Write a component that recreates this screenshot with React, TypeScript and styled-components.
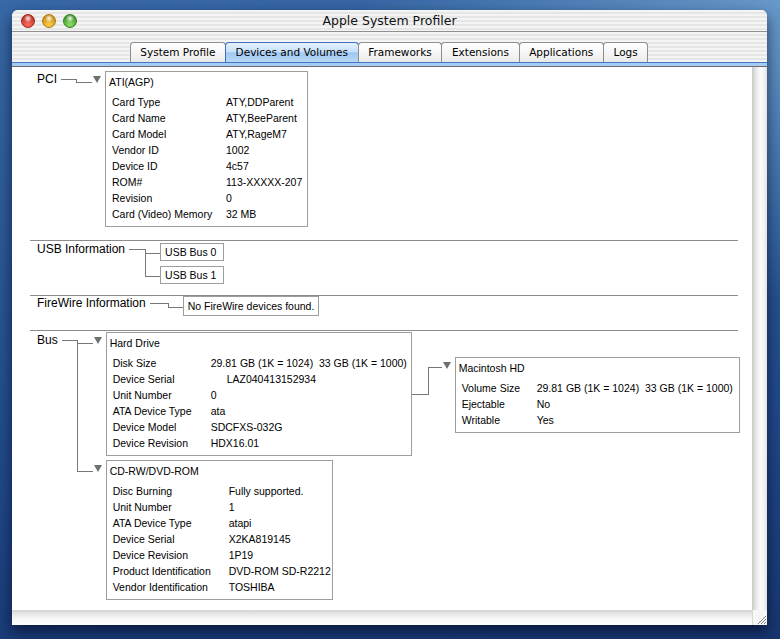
import React from 'react';
import styled, { createGlobalStyle } from 'styled-components';

const GlobalStyle = createGlobalStyle`
  html, body {
    margin: 0;
    padding: 0;
  }
  body {
    width: 780px;
    height: 639px;
    overflow: hidden;
    font-family: "Liberation Sans", Arial, sans-serif;
  }
`;

const pinstripe = `repeating-linear-gradient(to bottom, #f4f4f4 0px, #f4f4f4 2px, #e6e6e6 2px, #e6e6e6 4px)`;

const Desktop = styled.div`
  width: 780px;
  height: 639px;
  box-sizing: border-box;
  padding: 10px 0 0 12px;
  background:
    radial-gradient(ellipse 420px 300px at 780px 0px, rgba(120, 170, 215, 0.75), rgba(120, 170, 215, 0) 100%),
    linear-gradient(175deg, #3868a6 0%, #2a5896 35%, #1f4788 70%, #173670 100%);
`;

const Window = styled.div`
  width: 755px;
  height: 615px;
  display: flex;
  flex-direction: column;
  border-radius: 6px 6px 0 0;
  overflow: hidden;
  background: #ececec;
  box-shadow: 0 6px 14px rgba(0, 0, 20, 0.6);
`;

const TitleBar = styled.div`
  height: 21px;
  flex-shrink: 0;
  display: grid;
  grid-template-columns: 1fr auto 1fr;
  align-items: center;
  background: ${pinstripe};
  border-bottom: 1px solid #8f8f8f;
`;

const Lights = styled.div`
  display: flex;
  gap: 7px;
  padding-left: 9px;
`;

const Light = styled.span<{ $c: string; $d: string }>`
  width: 14px;
  height: 14px;
  border-radius: 50%;
  box-sizing: border-box;
  border: 1px solid ${(p) => p.$d};
  background:
    radial-gradient(circle at 50% 28%, rgba(255, 255, 255, 0.9) 0, rgba(255, 255, 255, 0) 38%),
    radial-gradient(circle at 50% 80%, ${(p) => p.$c} 0, ${(p) => p.$d} 100%);
`;

const Title = styled.div`
  font-family: "DejaVu Sans", sans-serif;
  font-size: 12.5px;
  color: #111;
  line-height: 21px;
`;

const TabBar = styled.div`
  height: 30px;
  flex-shrink: 0;
  display: flex;
  justify-content: center;
  align-items: flex-end;
  background: ${pinstripe};
`;

const Tab = styled.div<{ $active?: boolean }>`
  height: 20px;
  box-sizing: border-box;
  padding: 0 9.6px;
  margin-left: -1px;
  border: 1px solid ${(p) => (p.$active ? '#3d6fc0' : '#8e8e8e')};
  border-bottom: none;
  border-radius: 4px 4px 0 0;
  font-family: "DejaVu Sans", sans-serif;
  font-size: 10.5px;
  line-height: 19px;
  color: #000;
  background: ${(p) =>
    p.$active
      ? 'linear-gradient(to bottom, #e6f1fd 0%, #c8e0f9 45%, #9fc8f2 52%, #b9d9f8 100%)'
      : 'linear-gradient(to bottom, #ffffff 0%, #f6f6f6 50%, #e9e9e9 100%)'};
`;

const TabRule = styled.div`
  height: 4px;
  flex-shrink: 0;
  background: linear-gradient(to bottom, #4478c4 0, #4478c4 1px, #a6cbf3 1px, #a6cbf3 4px);
  border-bottom: 1px solid #6b6b6b;
`;

const Body = styled.div`
  flex: 1;
  display: flex;
  min-height: 0;
`;

const Content = styled.div`
  flex: 1;
  background: #fff;
`;

const VScroll = styled.div`
  width: 15px;
  background: linear-gradient(to right, #c9c9c9 0%, #e6e6e6 25%, #fbfbfb 55%, #f3f3f3 80%, #e2e2e2 100%);
`;

const Footer = styled.div`
  height: 15px;
  flex-shrink: 0;
  display: flex;
`;

const HScroll = styled.div`
  flex: 1;
  background: linear-gradient(to bottom, #d3d3d3 0%, #e9e9e9 30%, #f8f8f8 60%, #fdfdfd 100%);
`;

const Grip = styled.div`
  width: 15px;
  background: #f6f6f6;
  border-left: 1px solid #d8d8d8;
  box-sizing: border-box;
  display: flex;
  align-items: flex-end;
  justify-content: flex-end;
`;

/* tree */

const Section = styled.div<{ $top: number; $bottom: number }>`
  display: flex;
  align-items: flex-start;
  padding: ${(p) => p.$top}px 0 ${(p) => p.$bottom}px 25px;
`;

const SectionLabel = styled.div<{ $y: number }>`
  font-size: 12px;
  line-height: 14px;
  color: #000;
  margin-top: ${(p) => p.$y - 7}px;
  white-space: nowrap;
`;

const Stub = styled.div<{ $y: number; $w: number }>`
  width: ${(p) => p.$w}px;
  margin: ${(p) => p.$y}px 0 0 4px;
  border-top: 1px solid #777;
  flex-shrink: 0;
`;

const Divider = styled.div`
  height: 1px;
  background: #8c8c8c;
  margin: 0 14px 0 18px;
`;

const Branches = styled.div`
  display: flex;
  flex-direction: column;
`;

const BranchRow = styled.div`
  display: flex;
  align-items: stretch;
`;

const Elbow = styled.div<{ $w: number }>`
  width: ${(p) => p.$w}px;
  flex-shrink: 0;
  display: flex;
  flex-direction: column;
`;

const ElbowGap = styled.div<{ $h: number }>`
  height: ${(p) => p.$h}px;
  flex-shrink: 0;
`;

const ElbowArm = styled.div<{ $h: number }>`
  height: ${(p) => p.$h}px;
  box-sizing: border-box;
  flex-shrink: 0;
  border-left: 1px solid #777;
  border-bottom: 1px solid #777;
`;

const ElbowTail = styled.div<{ $on: boolean }>`
  flex: 1;
  border-left: 1px solid ${(p) => (p.$on ? '#777' : 'transparent')};
`;

const BranchBody = styled.div<{ $after: number }>`
  padding-bottom: ${(p) => p.$after}px;
`;

const Node = styled.div`
  display: flex;
  align-items: flex-start;
`;

const TriangleSvg = styled.svg`
  flex-shrink: 0;
  margin: 5px 4px 0 1px;
`;

const Box = styled.div<{ $w: number }>`
  width: ${(p) => p.$w}px;
  box-sizing: border-box;
  border: 1px solid #9d9d9d;
  background: #fff;
  font-size: 10.5px;
  color: #000;
  flex-shrink: 0;
`;

const InfoBox = styled(Box)`
  padding: 2px 3px 4px 3px;
`;

const PlainBox = styled(Box)<{ $h: number }>`
  height: ${(p) => p.$h}px;
  line-height: ${(p) => p.$h - 2}px;
  padding-left: 4px;
  white-space: nowrap;
`;

const BoxTitle = styled.div`
  line-height: 16px;
  white-space: nowrap;
`;

const Props = styled.div<{ $label: number }>`
  display: grid;
  grid-template-columns: ${(p) => p.$label}px auto;
  grid-auto-rows: 16px;
  align-items: center;
  margin-top: 4px;
  padding-left: 3px;
`;

const PropText = styled.span<{ $indent?: number }>`
  white-space: pre;
  padding-left: ${(p) => p.$indent ?? 0}px;
`;

const SideLink = styled.div`
  display: flex;
  align-items: flex-start;
  margin-top: 35px;
`;

const SideDrop = styled.div`
  width: 17px;
  height: 28px;
  box-sizing: border-box;
  border-right: 1px solid #777;
  border-bottom: 1px solid #777;
`;

const SideRun = styled.div`
  width: 13px;
  border-top: 1px solid #777;
`;

const SubNode = styled(Node)`
  margin-top: 25px;
`;

const Triangle = () => (
  <TriangleSvg width="8" height="7" viewBox="0 0 8 7">
    <polygon points="0,0 8,0 4,7" fill="#6f6f6f" />
  </TriangleSvg>
);

type Row = [string, string, number?];

const Info = ({ title, rows, width, label }: { title: string; rows: Row[]; width: number; label: number }) => (
  <InfoBox $w={width}>
    <BoxTitle>{title}</BoxTitle>
    <Props $label={label}>
      {rows.map(([k, v, indent]) => (
        <React.Fragment key={k}>
          <PropText>{k}</PropText>
          <PropText $indent={indent}>{v}</PropText>
        </React.Fragment>
      ))}
    </Props>
  </InfoBox>
);

type BranchProps = {
  first?: boolean;
  last?: boolean;
  stubY: number;
  elbowY: number;
  width: number;
  after?: number;
  children: React.ReactNode;
};

const Branch = ({ first, last, stubY, elbowY, width, after = 0, children }: BranchProps) => {
  const gap = first ? stubY : 0;
  return (
    <BranchRow>
      <Elbow $w={width}>
        <ElbowGap $h={gap} />
        <ElbowArm $h={elbowY + 1 - gap} />
        <ElbowTail $on={!last} />
      </Elbow>
      <BranchBody $after={after}>{children}</BranchBody>
    </BranchRow>
  );
};

const pciRows: Row[] = [
  ['Card Type', 'ATY,DDParent'],
  ['Card Name', 'ATY,BeeParent'],
  ['Card Model', 'ATY,RageM7'],
  ['Vendor ID', '1002'],
  ['Device ID', '4c57'],
  ['ROM#', '113-XXXXX-207'],
  ['Revision', '0'],
  ['Card (Video) Memory', '32 MB'],
];

const hdRows: Row[] = [
  ['Disk Size', '29.81 GB (1K = 1024)  33 GB (1K = 1000)'],
  ['Device Serial', 'LAZ040413152934', 16],
  ['Unit Number', '0'],
  ['ATA Device Type', 'ata'],
  ['Device Model', 'SDCFXS-032G'],
  ['Device Revision', 'HDX16.01'],
];

const volRows: Row[] = [
  ['Volume Size', '29.81 GB (1K = 1024)  33 GB (1K = 1000)'],
  ['Ejectable', 'No'],
  ['Writable', 'Yes'],
];

const cdRows: Row[] = [
  ['Disc Burning', 'Fully supported.'],
  ['Unit Number', '1'],
  ['ATA Device Type', 'atapi'],
  ['Device Serial', 'X2KA819145'],
  ['Device Revision', '1P19'],
  ['Product Identification', 'DVD-ROM SD-R2212'],
  ['Vendor Identification', 'TOSHIBA'],
];

const tabs = ['System Profile', 'Devices and Volumes', 'Frameworks', 'Extensions', 'Applications', 'Logs'];

export default function App() {
  return (
    <>
      <GlobalStyle />
      <Desktop>
        <Window>
          <TitleBar>
            <Lights>
              <Light $c="#ff6a5c" $d="#a3241b" />
              <Light $c="#ffcf4a" $d="#b3780f" />
              <Light $c="#8fe06a" $d="#2f7d1c" />
            </Lights>
            <Title>Apple System Profiler</Title>
            <div />
          </TitleBar>
          <TabBar>
            {tabs.map((t) => (
              <Tab key={t} $active={t === 'Devices and Volumes'}>
                {t}
              </Tab>
            ))}
          </TabBar>
          <TabRule />
          <Body>
            <Content>
              <Section $top={4} $bottom={13}>
                <SectionLabel $y={8}>PCI</SectionLabel>
                <Stub $y={8} $w={15} />
                <Branches>
                  <Branch first last stubY={8} elbowY={11} width={16}>
                    <Node>
                      <Triangle />
                      <Info title="ATI(AGP)" rows={pciRows} width={203} label={114} />
                    </Node>
                  </Branch>
                </Branches>
              </Section>
              <Divider />
              <Section $top={2} $bottom={11}>
                <SectionLabel $y={6}>USB Information</SectionLabel>
                <Stub $y={6} $w={16} />
                <Branches>
                  <Branch first stubY={6} elbowY={10} width={15} after={5}>
                    <PlainBox $w={64} $h={18}>USB Bus 0</PlainBox>
                  </Branch>
                  <Branch last stubY={6} elbowY={10} width={15}>
                    <PlainBox $w={64} $h={18}>USB Bus 1</PlainBox>
                  </Branch>
                </Branches>
              </Section>
              <Divider />
              <Section $top={0} $bottom={14}>
                <SectionLabel $y={7}>FireWire Information</SectionLabel>
                <Stub $y={7} $w={18} />
                <Branches>
                  <Branch first last stubY={7} elbowY={11} width={15}>
                    <PlainBox $w={136} $h={20}>No FireWire devices found.</PlainBox>
                  </Branch>
                </Branches>
              </Section>
              <Divider />
              <Section $top={1} $bottom={0}>
                <SectionLabel $y={8}>Bus</SectionLabel>
                <Stub $y={8} $w={15} />
                <Branches>
                  <Branch first stubY={8} elbowY={11} width={16} after={4}>
                    <Node>
                      <Triangle />
                      <Info title="Hard Drive" rows={hdRows} width={306} label={98} />
                      <SideLink>
                        <SideDrop />
                        <SideRun />
                      </SideLink>
                      <SubNode>
                        <Triangle />
                        <Info title="Macintosh HD" rows={volRows} width={285} label={75} />
                      </SubNode>
                    </Node>
                  </Branch>
                  <Branch last stubY={8} elbowY={11} width={16}>
                    <Node>
                      <Triangle />
                      <Info title="CD-RW/DVD-ROM" rows={cdRows} width={227} label={116} />
                    </Node>
                  </Branch>
                </Branches>
              </Section>
            </Content>
            <VScroll />
          </Body>
          <Footer>
            <HScroll />
            <Grip>
              <svg width="12" height="12" viewBox="0 0 12 12">
                <path d="M11 3 L3 11 M11 6 L6 11 M11 9 L9 11" stroke="#7d7d7d" strokeWidth="1" />
                <path d="M11 4 L4 11 M11 7 L7 11 M11 10 L10 11" stroke="#ffffff" strokeWidth="1" />
              </svg>
            </Grip>
          </Footer>
        </Window>
      </Desktop>
    </>
  );
}
